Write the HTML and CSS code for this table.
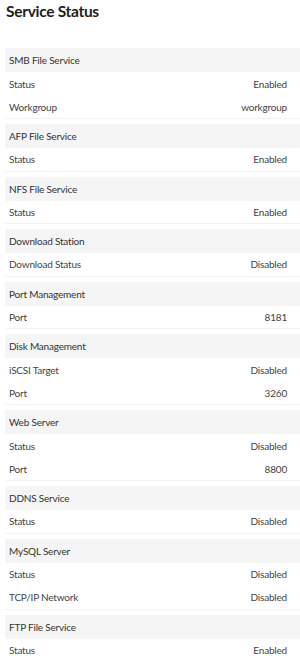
FILE: index.html
```html
<!DOCTYPE html>
<html>
<head>
<meta charset="utf-8">
<link rel="stylesheet" href="styles.css">
</head>
<body>
<h1 class="title">Service Status</h1>
<div class="list">
  <section class="group">
    <div class="head">SMB File Service</div>
    <div class="row"><span>Status</span><span>Enabled</span></div>
    <div class="row"><span>Workgroup</span><span>workgroup</span></div>
  </section>
  <section class="group">
    <div class="head">AFP File Service</div>
    <div class="row"><span>Status</span><span>Enabled</span></div>
  </section>
  <section class="group">
    <div class="head">NFS File Service</div>
    <div class="row"><span>Status</span><span>Enabled</span></div>
  </section>
  <section class="group">
    <div class="head">Download Station</div>
    <div class="row"><span>Download Status</span><span>Disabled</span></div>
  </section>
  <section class="group">
    <div class="head">Port Management</div>
    <div class="row"><span>Port</span><span>8181</span></div>
  </section>
  <section class="group">
    <div class="head">Disk Management</div>
    <div class="row"><span>iSCSI Target</span><span>Disabled</span></div>
    <div class="row"><span>Port</span><span>3260</span></div>
  </section>
  <section class="group">
    <div class="head">Web Server</div>
    <div class="row"><span>Status</span><span>Disabled</span></div>
    <div class="row"><span>Port</span><span>8800</span></div>
  </section>
  <section class="group">
    <div class="head">DDNS Service</div>
    <div class="row"><span>Status</span><span>Disabled</span></div>
  </section>
  <section class="group">
    <div class="head">MySQL Server</div>
    <div class="row"><span>Status</span><span>Disabled</span></div>
    <div class="row"><span>TCP/IP Network</span><span>Disabled</span></div>
  </section>
  <section class="group">
    <div class="head">FTP File Service</div>
    <div class="row"><span>Status</span><span>Enabled</span></div>
  </section>
</div>
</body>
</html>
```
FILE: styles.css
```css
html, body {
  margin: 0;
  padding: 0;
  background: #ffffff;
}
body {
  font-family: Lato, "Noto Sans", sans-serif;
  color: #3a3a3a;
  overflow: hidden;
}
.title {
  margin: 0;
  padding: 1px 0 0 6px;
  height: 47px;
  font-size: 15.5px;
  line-height: 20px;
  font-weight: 700;
  letter-spacing: -0.3px;
  color: #1e1e1e;
}
.list {
  padding-left: 5px;
}
.group {
  margin-bottom: 5px;
}
.head {
  height: 24px;
  display: flex;
  align-items: center;
  padding-left: 4px;
  background: #f5f5f5;
  font-size: 10px;
  letter-spacing: -0.2px;
  color: #333;
}
.row {
  height: 23.5px;
  box-sizing: border-box;
  display: flex;
  align-items: center;
  justify-content: space-between;
  padding: 0 13px 0 4px;
  font-size: 10px;
  letter-spacing: -0.2px;
  color: #444;
}
.row:last-child {
  border-bottom: 1px solid #f2f2f2;
}
```
